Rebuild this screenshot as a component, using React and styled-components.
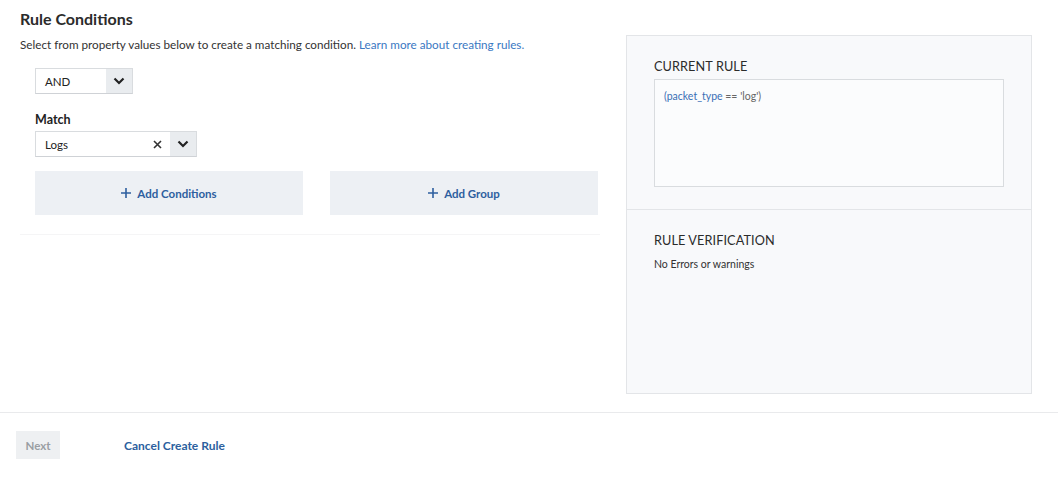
import React from 'react';
import styled, { createGlobalStyle } from 'styled-components';

const GlobalStyle = createGlobalStyle`
  html, body {
    margin: 0;
    padding: 0;
    background: #ffffff;
    font-family: Lato, "Liberation Sans", sans-serif;
    color: #2f2f2f;
  }
  * { box-sizing: border-box; }
`;

const Page = styled.div`
  width: 1058px;
  height: 481px;
  display: flex;
  flex-direction: column;
`;

const Main = styled.div`
  display: flex;
  height: 413px;
  border-bottom: 1px solid #e9eaec;
  padding: 0 0 0 20px;
`;

const LeftColumn = styled.div`
  width: 580px;
  padding-top: 10px;
`;

const Title = styled.h2`
  margin: 0;
  font-size: 16px;
  line-height: 18px;
  font-weight: 700;
  color: #2b2b2b;
`;

const Subtitle = styled.p`
  margin: 9px 0 0;
  font-size: 11.7px;
  line-height: 14px;
  color: #333;
`;

const Link = styled.a`
  color: #3a78c2;
  text-decoration: none;
`;

const Conditions = styled.div`
  padding: 0 0 0 15px;
  margin-top: 17px;
  padding-bottom: 19px;
  border-bottom: 1px solid #f5f5f6;
`;

const Select = styled.div`
  display: flex;
  align-items: stretch;
  width: ${p => p.$width}px;
  height: 26px;
  border: 1px solid #d9dcdf;
  border-bottom-color: #cfd2d6;
  background: #fff;
`;

const SelectValue = styled.div`
  flex: 1;
  display: flex;
  align-items: center;
  padding-left: 9px;
  font-size: 11.5px;
  color: #222;
`;

const ClearButton = styled.div`
  width: 26px;
  display: flex;
  align-items: center;
  justify-content: center;
`;

const Chevron = styled.div`
  width: 26px;
  display: flex;
  align-items: center;
  justify-content: center;
  background: #e9ecef;
`;

const FieldLabel = styled.div`
  margin-top: 19px;
  font-size: 12.5px;
  line-height: 14px;
  font-weight: 700;
  color: #222;
`;

const Field = styled.div`
  margin-top: 4px;
`;

const ButtonRow = styled.div`
  display: grid;
  grid-template-columns: 268px 268px;
  column-gap: 27px;
  margin-top: 14px;
`;

const AddButton = styled.button`
  height: 44px;
  border: none;
  background: #edf0f4;
  color: #2e5f9f;
  font-family: inherit;
  font-size: 11.5px;
  font-weight: 700;
  display: flex;
  align-items: center;
  justify-content: center;
  gap: 6px;
  cursor: pointer;
`;

const RulePanel = styled.aside`
  margin: 35px 0 0 26px;
  width: 406px;
  height: 359px;
  border: 1px solid #e3e5e8;
  background: #f8f9fb;
  display: flex;
  flex-direction: column;
`;

const PanelSection = styled.section`
  padding: 22px 27px 0;
  height: ${p => p.$height || 'auto'};
  flex: ${p => (p.$grow ? 1 : 'none')};
  border-top: ${p => (p.$divided ? '1px solid #e3e5e8' : 'none')};
`;

const PanelHeading = styled.h3`
  margin: 0;
  font-size: 12.7px;
  line-height: 16px;
  font-weight: 400;
  color: #2b2b2b;
  letter-spacing: 0.1px;
`;

const RuleBox = styled.div`
  margin-top: 5px;
  width: 350px;
  height: 108px;
  border: 1px solid #d9dcdf;
  background: #fbfcfd;
  padding: 10px 9px;
  font-size: 10.5px;
  color: #666;
`;

const RuleField = styled.span`
  color: #3a6fb5;
`;

const VerifyText = styled.p`
  margin: 10px 0 0;
  font-size: 10.5px;
  color: #333;
`;

const Footer = styled.div`
  display: flex;
  align-items: center;
  padding: 18px 0 0 16px;
  gap: 64px;
`;

const NextButton = styled.button`
  width: 44px;
  height: 28px;
  border: none;
  background: #eef0f2;
  color: #9a9ea3;
  font-family: inherit;
  font-size: 11.5px;
  font-weight: 700;
`;

const CancelLink = styled.a`
  color: #2c5f9e;
  font-size: 12px;
  font-weight: 700;
  text-decoration: none;
`;

const ChevronIcon = () => (
  <svg width="12" height="8" viewBox="0 0 12 8">
    <path d="M1.5 1.5 L6 6 L10.5 1.5" fill="none" stroke="#222" strokeWidth="2.2" />
  </svg>
);

const CloseIcon = () => (
  <svg width="9" height="9" viewBox="0 0 9 9">
    <path d="M1 1 L8 8 M8 1 L1 8" stroke="#333" strokeWidth="1.6" />
  </svg>
);

const PlusIcon = () => (
  <svg width="10" height="10" viewBox="0 0 10 10">
    <path d="M5 0 V10 M0 5 H10" stroke="#2e5f9f" strokeWidth="1.6" />
  </svg>
);

export default function App() {
  return (
    <Page>
      <GlobalStyle />
      <Main>
        <LeftColumn>
          <Title>Rule Conditions</Title>
          <Subtitle>
            Select from property values below to create a matching condition.{' '}
            <Link href="#">Learn more about creating rules.</Link>
          </Subtitle>
          <Conditions>
            <Select $width={98}>
              <SelectValue>AND</SelectValue>
              <Chevron><ChevronIcon /></Chevron>
            </Select>
            <FieldLabel>Match</FieldLabel>
            <Field>
              <Select $width={162}>
                <SelectValue>Logs</SelectValue>
                <ClearButton><CloseIcon /></ClearButton>
                <Chevron><ChevronIcon /></Chevron>
              </Select>
            </Field>
            <ButtonRow>
              <AddButton><PlusIcon /> Add Conditions</AddButton>
              <AddButton><PlusIcon /> Add Group</AddButton>
            </ButtonRow>
          </Conditions>
        </LeftColumn>
        <RulePanel>
          <PanelSection $height="173px">
            <PanelHeading>CURRENT RULE</PanelHeading>
            <RuleBox>
              <RuleField>(packet_type</RuleField> == 'log')
            </RuleBox>
          </PanelSection>
          <PanelSection $divided $grow>
            <PanelHeading>RULE VERIFICATION</PanelHeading>
            <VerifyText>No Errors or warnings</VerifyText>
          </PanelSection>
        </RulePanel>
      </Main>
      <Footer>
        <NextButton>Next</NextButton>
        <CancelLink href="#">Cancel Create Rule</CancelLink>
      </Footer>
    </Page>
  );
}
